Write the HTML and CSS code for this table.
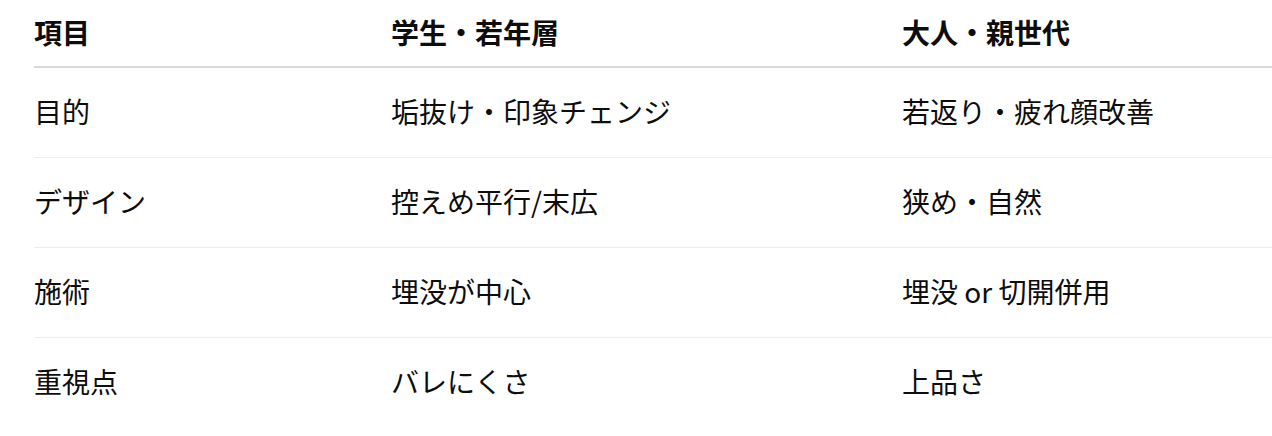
FILE: index.html
```html
<!DOCTYPE html>
<html lang="ja">
<head>
<meta charset="utf-8">
<link rel="stylesheet" href="styles.css">
</head>
<body>
<table class="cmp">
  <colgroup>
    <col class="c1">
    <col class="c2">
    <col class="c3">
  </colgroup>
  <thead>
    <tr><th>項目</th><th>学生・若年層</th><th>大人・親世代</th></tr>
  </thead>
  <tbody>
    <tr><td>目的</td><td>垢抜け・印象チェンジ</td><td>若返り・疲れ顔改善</td></tr>
    <tr><td>デザイン</td><td>控えめ平行/末広</td><td>狭め・自然</td></tr>
    <tr><td>施術</td><td>埋没が中心</td><td>埋没 or 切開併用</td></tr>
    <tr><td>重視点</td><td>バレにくさ</td><td>上品さ</td></tr>
  </tbody>
</table>
</body>
</html>
```
FILE: styles.css
```css
html, body {
  margin: 0;
  padding: 0;
  background: #ffffff;
}
body {
  font-family: "Noto Sans CJK JP", "Noto Sans", sans-serif;
  color: #0d0d0d;
  font-size: 28px;
  overflow: hidden;
}
.cmp {
  margin-left: 34px;
  width: 1300px;
  border-collapse: collapse;
  table-layout: fixed;
}
.c1 { width: 357px; }
.c2 { width: 511px; }
.c3 { width: 432px; }
.cmp th,
.cmp td {
  text-align: left;
  padding: 0;
  line-height: 40px;
  white-space: nowrap;
}
.cmp th {
  font-weight: 700;
  padding-top: 12px;
  padding-bottom: 14px;
  border-bottom: 2px solid #d9d9d9;
}
.cmp td {
  font-weight: 400;
  padding-top: 23px;
  padding-bottom: 26px;
  border-bottom: 1px solid #ececec;
}
.cmp tbody tr:last-child td {
  border-bottom: none;
}
```
